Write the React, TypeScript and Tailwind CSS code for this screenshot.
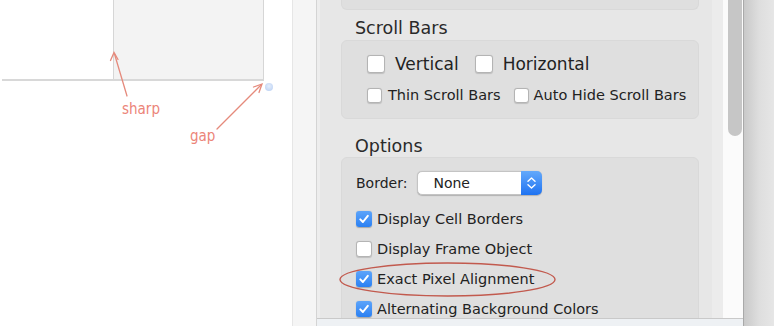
import React from "react";

const F = { fontFamily: '"DejaVu Sans", "Liberation Sans", sans-serif' };

function Box({ checked, size }: { checked?: boolean; size: number }) {
  if (checked) {
    return (
      <div
        className="flex shrink-0 items-center justify-center rounded-[3px] bg-gradient-to-b from-[#5ca4fa] to-[#2a80f2] shadow-[0_0.5px_1px_rgba(0,0,0,0.25)]"
        style={{ width: size, height: size }}
      >
        <svg width={size - 4} height={size - 4} viewBox="0 0 12 12">
          <path d="M2.3 6.4 L4.9 9 L9.8 2.8" fill="none" stroke="white" strokeWidth="2" strokeLinecap="round" strokeLinejoin="round" />
        </svg>
      </div>
    );
  }
  return (
    <div
      className="shrink-0 rounded-[3px] border border-[#b4b4b4] bg-white shadow-[0_0.5px_1px_rgba(0,0,0,0.15)]"
      style={{ width: size, height: size }}
    />
  );
}

function Row({ checked, label, children }: { checked?: boolean; label: string; children?: React.ReactNode }) {
  return (
    <div className="relative flex h-[16px] items-center gap-[5px]">
      <Box checked={checked} size={16} />
      <span className="text-[14.5px] leading-[16px] text-[#222]">{label}</span>
      {children}
    </div>
  );
}

export default function App() {
  return (
    <div className="flex h-[326px] w-[774px] overflow-hidden bg-white" style={F}>
      {/* left canvas */}
      <div className="relative h-full w-[292px] shrink-0 bg-white">
        <div className="absolute left-[113px] top-0 h-[80px] w-[151px] border-x-[1.5px] border-[#d6d6d6] bg-[#f3f3f3]" />
        <div className="absolute left-[2px] top-[79px] h-[2px] w-[262px] bg-[#d8d8d8]" />
        <div className="absolute left-[265px] top-[83px] h-[8px] w-[8px] rounded-full bg-[radial-gradient(circle_at_50%_40%,#e4eefc,#b6cdf2)]" />
        <svg className="absolute left-0 top-0" width="292" height="326">
          <g stroke="#e58a7c" strokeWidth="1.3" fill="none" strokeLinecap="round">
            <line x1="127" y1="96" x2="114.5" y2="54" />
            <path d="M110.5 60.5 L114 52.5 L118 59.5" />
            <line x1="217" y1="129" x2="261" y2="85" />
            <path d="M253.5 87 L262 84 L259 92.5" />
          </g>
        </svg>
        <span
          className="absolute left-[122px] top-[102px] text-[15px] leading-[15px] text-[#ec8579]"
          style={{ fontFamily: '"DejaVu Sans Condensed", "DejaVu Sans", sans-serif' }}
        >
          sharp
        </span>
        <span
          className="absolute left-[190px] top-[129px] text-[15px] leading-[15px] text-[#ec8579]"
          style={{ fontFamily: '"DejaVu Sans Condensed", "DejaVu Sans", sans-serif' }}
        >
          gap
        </span>
      </div>

      {/* gutter strip */}
      <div className="h-full w-[25px] shrink-0 border-l border-r border-l-[#e6e6e6] border-r-[#d4d4d4] bg-[#f5f5f5]" />

      {/* middle column */}
      <div className="flex h-full w-[426px] shrink-0 flex-col">
        <div className="flex h-[318px] shrink-0 overflow-hidden">
          {/* panel */}
          <div className="flex h-full w-[395px] shrink-0 flex-col border-l-[3px] border-[#ededed] bg-[#e7e7e7] pl-[21px] pr-[13px]">
            {/* top group tail */}
            <div className="h-[10px] shrink-0 rounded-b-[6px] border-x border-b border-[#d9d9d9] bg-[#dfdfdf]" />

            <div className="mt-[7px] h-[22px] pl-[14px] text-[17.5px] leading-[22px] text-[#2a2a2a]">Scroll Bars</div>

            <div className="mt-[1px] flex h-[79px] shrink-0 flex-col rounded-[6px] border border-[#d9d9d9] bg-[#dfdfdf] pl-[25px] pt-[14px]">
              <div className="flex h-[18px] items-center">
                <Box size={18} />
                <span className="ml-[10px] text-[17px] leading-[18px] text-[#222]">Vertical</span>
                <div className="ml-[16px]">
                  <Box size={18} />
                </div>
                <span className="ml-[10px] text-[17px] leading-[18px] text-[#222]">Horizontal</span>
              </div>
              <div className="mt-[15px] flex h-[15px] items-center">
                <Box size={15} />
                <span className="ml-[6px] text-[14.5px] leading-[15px] text-[#222]">Thin Scroll Bars</span>
                <div className="ml-[13px]">
                  <Box size={15} />
                </div>
                <span className="ml-[5px] text-[14.5px] leading-[15px] text-[#222]">Auto Hide Scroll Bars</span>
              </div>
            </div>

            <div className="mt-[16px] h-[22px] pl-[14px] text-[17.5px] leading-[22px] text-[#2a2a2a]">Options</div>

            <div className="flex shrink-0 flex-col rounded-[6px] border border-[#d9d9d9] bg-[#dfdfdf] pb-[20px] pl-[14px] pt-[13px]">
              <div className="flex h-[24px] items-center">
                <span className="text-[14px] leading-[16px] text-[#222]">Border:</span>
                <div className="ml-[10px] flex h-[24px] w-[125px] items-center rounded-[5px] border border-[#c4c4c4] bg-white shadow-[0_0.5px_1px_rgba(0,0,0,0.2)]">
                  <span className="ml-[15px] flex-1 text-[14px] leading-[16px] text-[#222]">None</span>
                  <div className="flex h-[24px] w-[21px] flex-col items-center justify-center gap-[2px] rounded-r-[5px] bg-gradient-to-b from-[#63a9fb] to-[#1d72f1] -mr-px -my-px">
                    <svg width="9" height="5" viewBox="0 0 9 5">
                      <path d="M1 4.2 L4.5 1 L8 4.2" fill="none" stroke="white" strokeWidth="1.4" strokeLinecap="round" strokeLinejoin="round" />
                    </svg>
                    <svg width="9" height="5" viewBox="0 0 9 5">
                      <path d="M1 0.8 L4.5 4 L8 0.8" fill="none" stroke="white" strokeWidth="1.4" strokeLinecap="round" strokeLinejoin="round" />
                    </svg>
                  </div>
                </div>
              </div>
              <div className="mt-[16px] flex flex-col gap-[14px]">
                <Row checked label="Display Cell Borders" />
                <Row label="Display Frame Object" />
                <Row checked label="Exact Pixel Alignment">
                  <svg className="pointer-events-none absolute left-[-17px] top-[-9px]" width="218" height="36" viewBox="0 0 218 36">
                    <ellipse cx="108.5" cy="17.5" rx="107.5" ry="16.5" fill="none" stroke="#c25a4e" strokeWidth="1.4" />
                  </svg>
                </Row>
                <Row checked label="Alternating Background Colors" />
              </div>
            </div>
          </div>
          {/* strip */}
          <div className="h-full w-[11px] shrink-0 bg-[#ececec]" />
          {/* track */}
          <div className="h-full w-[20px] shrink-0 bg-[#fbfbfb] pl-[5px]">
            <div className="h-[136px] w-[14px] rounded-b-full bg-[#c6c6c6]" />
          </div>
        </div>
        <div className="flex-1 border-t border-[#c9c9c9] bg-[#eef1f4]" />
      </div>

      {/* right edge */}
      <div className="h-full w-[31px] shrink-0 border-l border-[#a9a9a9] bg-gradient-to-r from-[#c9c9c9] via-[#dedede] to-[#e6e6e6]" />
    </div>
  );
}
